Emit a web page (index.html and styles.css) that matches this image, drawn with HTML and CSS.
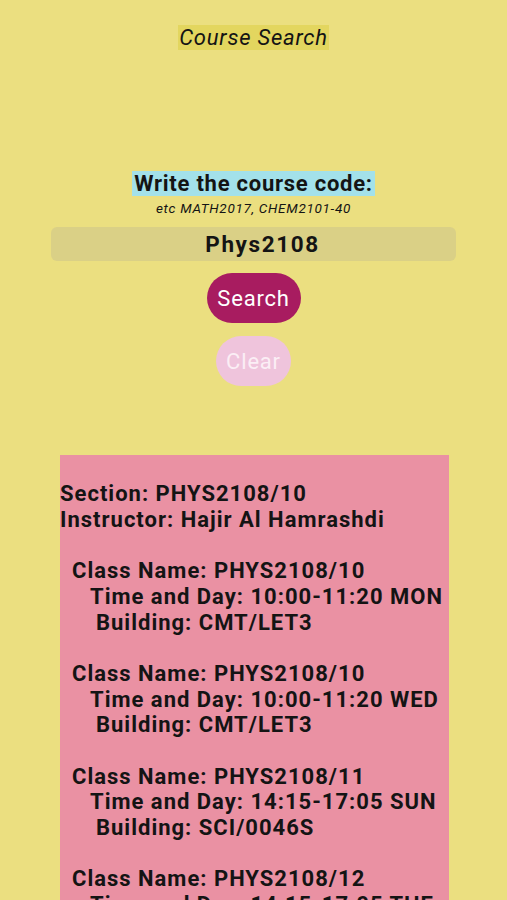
FILE: index.html
```html
<!DOCTYPE html>
<html lang="en">
<head>
  <meta charset="UTF-8">
  <meta name="viewport" content="width=device-width, initial-scale=1.0">
  <title>Course Search</title>
  <link rel="stylesheet" href="styles.css">
</head>
<body>

  <div class="top">
    <span class="title">Course Search</span>
  </div>

  <div class="form">
    <span class="prompt">Write the course code:</span>
    <span class="hint">etc MATH2017, CHEM2101-40</span>
    <div class="field">Phys2108</div>
    <button class="btn search">Search</button>
    <button class="btn clear">Clear</button>
  </div>

  <div class="results">
    <div class="line">Section: PHYS2108/10</div>
    <div class="line">Instructor: Hajir Al Hamrashdi</div>
    <div class="gap"></div>

    <div class="line cls">Class Name: PHYS2108/10</div>
    <div class="line time">Time and Day: 10:00-11:20 MON</div>
    <div class="line bld">Building: CMT/LET3</div>
    <div class="gap"></div>

    <div class="line cls">Class Name: PHYS2108/10</div>
    <div class="line time">Time and Day: 10:00-11:20 WED</div>
    <div class="line bld">Building: CMT/LET3</div>
    <div class="gap"></div>

    <div class="line cls">Class Name: PHYS2108/11</div>
    <div class="line time">Time and Day: 14:15-17:05 SUN</div>
    <div class="line bld">Building: SCI/0046S</div>
    <div class="gap"></div>

    <div class="line cls">Class Name: PHYS2108/12</div>
    <div class="line time">Time and Day: 14:15-17:05 THE</div>
  </div>

</body>
</html>
```

FILE: styles.css
```css
body {
  margin: 0;
  background-color: #ebdf80;
  font-family: Roboto, "Noto Sans", sans-serif;
  color: #141414;
}
.top {
  display: flex;
  justify-content: center;
  padding-top: 25px;
}
.title {
  background-color: #e3d65f;
  font-style: italic;
  font-size: 22px;
  letter-spacing: 0.8px;
  line-height: 25px;
  padding: 0 1px;
}
.form {
  display: flex;
  flex-direction: column;
  align-items: center;
  padding-top: 121px;
}
.prompt {
  background-color: #a3e1ea;
  font-weight: bold;
  font-size: 22px;
  letter-spacing: 0.75px;
  line-height: 25px;
  padding: 0 2px;
}
.hint {
  font-style: italic;
  font-size: 13.5px;
  letter-spacing: 0.7px;
  line-height: 16px;
  margin-top: 4px;
}
.field {
  box-sizing: border-box;
  width: 405px;
  height: 34px;
  margin-top: 11px;
  padding-left: 18px;
  border-radius: 6px;
  background-color: #dad086;
  font-weight: bold;
  font-size: 22.5px;
  letter-spacing: 1.6px;
  line-height: 34px;
  text-align: center;
}
.btn {
  border: none;
  border-radius: 25px;
  height: 50px;
  font-family: Roboto, "Noto Sans", sans-serif;
  font-size: 22px;
  letter-spacing: 0.8px;
  color: #fff;
  padding: 0;
}
.search {
  margin-top: 12px;
  background-color: #a81c60;
  width: 94px;
}
.clear {
  margin-top: 13px;
  background-color: #efc4dc;
  color: #fbeef5;
  width: 75px;
}
.results {
  margin: 69px 58px 0 60px;
  background-color: #ea91a3;
  padding-top: 26px;
  height: 420px;
  overflow: hidden;
}
.line {
  font-weight: bold;
  font-size: 22px;
  letter-spacing: 1px;
  line-height: 25.7px;
  white-space: nowrap;
}
.gap {
  height: 25.7px;
}
.cls {
  padding-left: 12px;
}
.time {
  padding-left: 30px;
}
.bld {
  padding-left: 36px;
}
```
